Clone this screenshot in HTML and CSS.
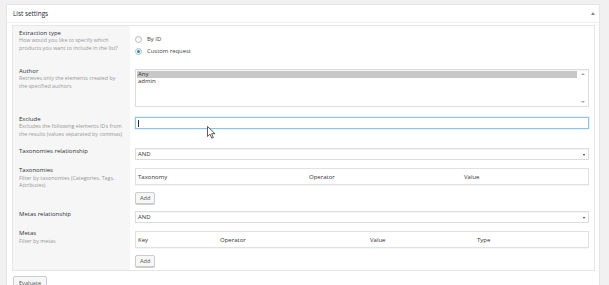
FILE: index.html
```html
<!DOCTYPE html>
<html lang="en">
  <head>
    <meta charset="UTF-8" />
    <title>List settings</title>
    <link rel="stylesheet" href="styles.css">
  </head>
  <body>
    <div class="panel">
      <div class="panel-head">
        <span>List settings</span>
        <span class="toggle"></span>
      </div>
      <div class="panel-body">
        <div class="settings">
          <!-- Extraction type -->
          <div class="row">
            <div class="label">
              <b>Extraction type</b>
              <p>How would you like to specify which products you want to include in the list?</p>
            </div>
            <div class="field radios">
              <label class="radio"><i></i>By ID</label>
              <label class="radio checked"><i></i>Custom request</label>
            </div>
          </div>
          <!-- Author -->
          <div class="row">
            <div class="label">
              <b>Author</b>
              <p>Retrieves only the elements created by the specified authors</p>
            </div>
            <div class="field">
              <div class="multi">
                <ul>
                  <li class="sel">Any</li>
                  <li>admin</li>
                </ul>
                <div class="scroll">
                  <span class="up"></span>
                  <span class="down"></span>
                </div>
              </div>
            </div>
          </div>
          <!-- Exclude -->
          <div class="row">
            <div class="label">
              <b>Exclude</b>
              <p>Excludes the following elements IDs from the results (values separated by commas)</p>
            </div>
            <div class="field">
              <div class="input focus"><span class="caret"></span></div>
              <svg class="cursor" width="9" height="13" viewBox="0 0 9 13">
                <path d="M0.5 0.5 L0.5 10.5 L3 8.2 L4.8 12.2 L6.3 11.5 L4.6 7.7 L8 7.7 Z" fill="#fff" stroke="#333" stroke-width="0.8" />
              </svg>
            </div>
          </div>
          <!-- Taxonomies relationship -->
          <div class="row rel">
            <div class="label">
              <b>Taxonomies relationship</b>
            </div>
            <div class="field">
              <div class="select">AND</div>
            </div>
          </div>
          <!-- Taxonomies -->
          <div class="row list">
            <div class="label">
              <b>Taxonomies</b>
              <p>Filter by taxonomies (Categories, Tags, Attributes)</p>
            </div>
            <div class="field">
              <div class="table tax">
                <span>Taxonomy</span>
                <span>Operator</span>
                <span>Value</span>
              </div>
              <button class="btn">Add</button>
            </div>
          </div>
          <!-- Metas relationship -->
          <div class="row rel">
            <div class="label">
              <b>Metas relationship</b>
            </div>
            <div class="field">
              <div class="select">AND</div>
            </div>
          </div>
          <!-- Metas -->
          <div class="row list last">
            <div class="label">
              <b>Metas</b>
              <p>Filter by metas</p>
            </div>
            <div class="field">
              <div class="table metas">
                <span>Key</span>
                <span>Operator</span>
                <span>Value</span>
                <span>Type</span>
              </div>
              <button class="btn">Add</button>
            </div>
          </div>
        </div>
        <button class="btn evaluate">Evaluate</button>
      </div>
    </div>
  </body>
</html>
```

FILE: styles.css
```css
* {
  margin: 0;
  padding: 0;
  box-sizing: border-box;
}

body {
  background: #f1f1f1;
  font-family: "Open Sans", "Liberation Sans", sans-serif;
  color: #32373c;
  font-size: 6px;
  height: 285px;
  overflow: hidden;
}

.panel {
  margin: 4px 9px 0 6px;
  background: #fff;
  border: 1px solid #e5e5e5;
  height: 290px;
}

.panel-head {
  height: 18px;
  padding: 0 4px 0 6px;
  display: flex;
  align-items: center;
  justify-content: space-between;
  border-bottom: 1px solid #eee;
  font-size: 6.4px;
  color: #23282d;
}

.toggle {
  width: 0;
  height: 0;
  border-left: 2px solid transparent;
  border-right: 2px solid transparent;
  border-bottom: 3px solid #888;
}

.panel-body {
  padding: 2px 4px 0 5px;
}

.settings {
  border: 1px solid #e5e5e5;
  background: linear-gradient(to right, #f6f6f6 117px, #fff 117px);
}

.row {
  display: flex;
}

.label {
  width: 117px;
  padding: 4px 6px 5px 6px;
  line-height: 7.4px;
}

.label b {
  display: block;
  font-weight: 400;
  font-size: 6px;
  color: #2c3136;
}

.label p {
  font-size: 5.35px;
  color: #969696;
}

.field {
  flex: 1;
  padding: 5px;
  position: relative;
}

/* radios */
.radios {
  padding: 7px 5px 7px 5px;
}

.radio {
  display: flex;
  align-items: center;
  height: 12px;
  font-size: 5.9px;
  color: #444;
}

.radio i {
  width: 7px;
  height: 7px;
  border: 1px solid #b4b9be;
  border-radius: 50%;
  margin-right: 5px;
  display: flex;
  align-items: center;
  justify-content: center;
  box-shadow: inset 0 1px 1px rgba(0, 0, 0, 0.08);
}

.radio.checked i::after {
  content: "";
  width: 3px;
  height: 3px;
  border-radius: 50%;
  background: #1e8cbe;
}

/* author */
.multi {
  height: 38px;
  border: 1px solid #ddd;
  display: flex;
  box-shadow: inset 0 1px 1px rgba(0, 0, 0, 0.05);
}

.multi ul {
  flex: 1;
  list-style: none;
  padding: 1px 0 0 1px;
  font-size: 6px;
  line-height: 7.4px;
  color: #333;
}

.multi li {
  padding-left: 1px;
}

.multi li.sel {
  background: #c8c8c8;
}

.scroll {
  width: 11px;
  display: flex;
  flex-direction: column;
  justify-content: space-between;
  align-items: center;
  padding: 3px 0;
}

.scroll span {
  width: 0;
  height: 0;
  border-left: 2px solid transparent;
  border-right: 2px solid transparent;
}

.scroll .up {
  border-bottom: 2px solid #a3a3a3;
}

.scroll .down {
  border-top: 2px solid #a3a3a3;
}

/* exclude */
.input {
  height: 12px;
  border: 1px solid #ddd;
  padding: 2px;
}

.input.focus {
  border-color: #8fc3e6;
  box-shadow: 0 0 1px rgba(30, 140, 190, 0.6);
}

.caret {
  display: block;
  width: 1px;
  height: 7px;
  background: #333;
}

.cursor {
  position: absolute;
  left: 77px;
  top: 14px;
}

/* relationship selects */
.rel .label {
  padding-top: 5px;
}

.rel .field {
  padding: 5px 5px 3px 5px;
}

.select {
  height: 12px;
  border: 1px solid #ddd;
  padding: 0 2px;
  display: flex;
  align-items: center;
  font-size: 5.9px;
  color: #333;
  position: relative;
  box-shadow: inset 0 1px 1px rgba(0, 0, 0, 0.04);
}

.select::after {
  content: "";
  position: absolute;
  right: 3px;
  top: 5px;
  border-left: 1.5px solid transparent;
  border-right: 1.5px solid transparent;
  border-top: 2px solid #333;
}

/* taxonomies & metas tables */
.list .field {
  padding: 5px 5px 2px 5px;
}

.list.last .field {
  padding-bottom: 3px;
}

.table {
  height: 17px;
  border: 1px solid #e1e1e1;
  box-shadow: 0 1px 1px rgba(0, 0, 0, 0.04);
  display: grid;
  align-items: center;
  font-size: 6px;
  color: #333;
}

.table span {
  padding-left: 2px;
}

.table.tax {
  grid-template-columns: 171px 155px 1fr;
}

.table.metas {
  grid-template-columns: 82px 150px 107px 1fr;
}

.btn {
  display: block;
  height: 12px;
  padding: 0 4px;
  margin-top: 7px;
  background: #f7f7f7;
  border: 1px solid #ccc;
  border-radius: 2px;
  box-shadow: 0 1px 0 #ccc;
  font-family: inherit;
  font-size: 5.6px;
  color: #555;
}

.evaluate {
  margin: 5px 0 0 1px;
  height: 13px;
  padding: 0 5px;
}
```
